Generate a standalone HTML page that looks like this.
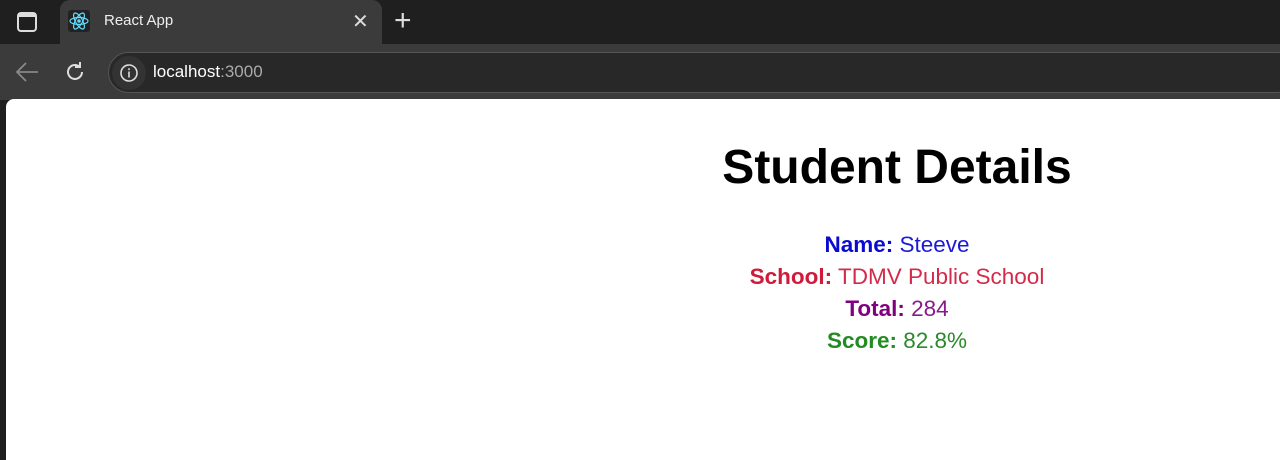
<!DOCTYPE html>
<html><head><style>
*{margin:0;padding:0;box-sizing:border-box}
body{width:1280px;height:460px;overflow:hidden;background:#1f1f1f;font-family:"Liberation Sans",sans-serif;position:relative}
.tabbar{position:absolute;left:0;top:0;width:1280px;height:44px;background:#1f1f1f}
.tab{position:absolute;left:60px;top:0;width:322px;height:44px;background:#3b3b3b;border-radius:10px 10px 0 0}
.toolbar{position:absolute;left:0;top:44px;width:1280px;height:56px;background:#3b3b3b}
.addr{position:absolute;left:108px;top:52px;width:1190px;height:41px;background:#282828;border-radius:21px;border:1px solid #555}
.page{position:absolute;left:6px;top:99px;width:1274px;height:361px;background:#fff;border-radius:8px 0 0 0}
.c{position:absolute;left:597px;width:600px;text-align:center}
h1{font-size:48px;font-weight:bold;color:#000;top:136px;line-height:64px}
.l{font-size:22.5px;line-height:32px}
b{font-weight:bold}
</style></head><body>
<div class="tabbar"></div>
<div class="tab"></div>
<svg style="position:absolute;left:16px;top:11px" width="22" height="22"><rect x="2" y="2" width="18" height="18" rx="3" fill="none" stroke="#ddd" stroke-width="2"/><rect x="2" y="2" width="18" height="4" fill="#ddd"/></svg>
<div style="position:absolute;left:68px;top:10px;width:22px;height:22px;background:#222;border-radius:3px"></div>
<svg style="position:absolute;left:68px;top:10px" width="22" height="22" viewBox="0 0 22 22"><g fill="none" stroke="#61dafb" stroke-width="1.2"><ellipse cx="11" cy="11" rx="9" ry="3.5"/><ellipse cx="11" cy="11" rx="9" ry="3.5" transform="rotate(60 11 11)"/><ellipse cx="11" cy="11" rx="9" ry="3.5" transform="rotate(120 11 11)"/></g><circle cx="11" cy="11" r="1.8" fill="#61dafb"/></svg>
<div style="position:absolute;left:104px;top:12px;color:#eee;font-size:15px">React App</div>
<div style="position:absolute;left:352px;top:9px;color:#ddd;font-size:20px">✕</div>
<div style="position:absolute;left:394px;top:4px;color:#ddd;font-size:30px;font-weight:300">+</div>
<div class="toolbar"></div>
<svg style="position:absolute;left:14px;top:60px" width="26" height="24"><path d="M24 12H3M12 3l-9 9 9 9" fill="none" stroke="#888" stroke-width="1.8"/></svg>
<svg style="position:absolute;left:63px;top:60px" width="24" height="24" viewBox="0 0 24 24"><path d="M19 12a7 7 0 1 1-2.5-5.4" fill="none" stroke="#ddd" stroke-width="2"/><path d="M17 2v5h-5" fill="none" stroke="#ddd" stroke-width="2"/></svg>
<div class="addr"></div>
<div style="position:absolute;left:112px;top:56px;width:34px;height:34px;border-radius:17px;background:#333"></div>
<svg style="position:absolute;left:119px;top:63px" width="20" height="20"><circle cx="10" cy="10" r="8" fill="none" stroke="#ddd" stroke-width="1.6"/><rect x="9.2" y="8.5" width="1.6" height="6" fill="#ddd"/><rect x="9.2" y="5.3" width="1.6" height="1.8" fill="#ddd"/></svg>
<div style="position:absolute;left:153px;top:62px;font-size:17px;color:#fff">localhost<span style="color:#aaa">:3000</span></div>
<div class="page"></div>
<h1 class="c">Student Details</h1>
<div class="c l" style="top:229px;color:#1a1ad8"><b style="font-weight:600;color:#0a0ad0">Name:</b> Steeve</div>
<div class="c l" style="top:261px;color:#d42a4a"><b style="color:#d01a3a">School:</b> TDMV Public School</div>
<div class="c l" style="top:293px;color:#8a1a8a"><b style="color:#800080">Total:</b> 284</div>
<div class="c l" style="top:325px;color:#2a8a2a"><b style="color:#228b22">Score:</b> 82.8%</div>
</body></html>
